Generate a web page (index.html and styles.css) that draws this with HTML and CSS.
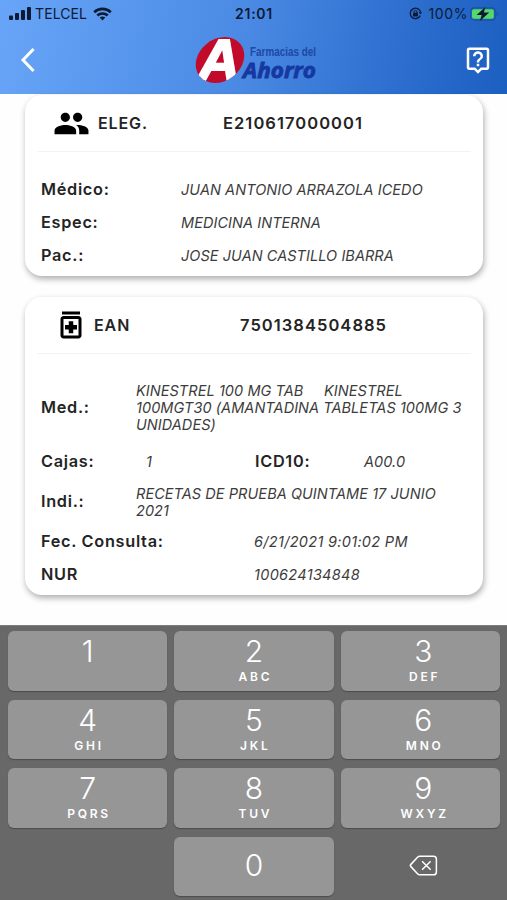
FILE: index.html
```
<!DOCTYPE html>
<html lang="es">
<head>
  <meta charset="UTF-8">
  <title>Farmacias del Ahorro</title>
  <meta name="viewport" content="width=device-width, initial-scale=1.0">
  <link rel="stylesheet" href="styles.css">
</head>
<body>
<!-- Header -->
<header>
  <div class="status-bar">
    <div class="status-left">
      <svg width="22" height="13" viewBox="0 0 22 13">
        <rect x="0" y="8.5" width="4" height="4.5" rx="1"/>
        <rect x="6" y="6" width="4" height="7" rx="1"/>
        <rect x="12" y="3" width="4" height="10" rx="1"/>
        <rect x="18" y="0" width="4" height="13" rx="1"/>
      </svg>
      <span class="carrier">TELCEL</span>
      <svg width="19" height="14" viewBox="0 0 19 14" fill="none" stroke="#0c1a33" stroke-width="2.6">
        <path d="M1.2 5.2a12 12 0 0 1 16.6 0"/>
        <path d="M4.3 8.5a7.6 7.6 0 0 1 10.4 0"/>
        <path d="M6.7 10.6a4.3 4.3 0 0 1 5.6 0L9.5 13.6z" fill="#0c1a33" stroke="none"/>
      </svg>
    </div>
    <div class="time">21:01</div>
    <div class="status-right">
      <svg width="13" height="13" viewBox="0 0 13 13">
        <path d="M11.2 8.6A5.2 5.2 0 1 1 11.6 5.4" fill="none" stroke="#0c1a33" stroke-width="1.3"/>
        <path d="M9.8 5.2h3.2l-1.5 2.4z"/>
        <rect x="4" y="5.8" width="5" height="3.6" rx=".6"/>
        <path d="M5 6V5a1.5 1.5 0 0 1 3 0v1" fill="none" stroke="#0c1a33"/>
      </svg>
      <span class="percent">100%</span>
      <svg width="29" height="14" viewBox="0 0 29 14">
        <rect x=".6" y=".9" width="24.6" height="12.2" rx="3.4" fill="none" stroke="#1f5292" stroke-width="1.1"/>
        <rect x="2" y="2.2" width="21.8" height="9.6" rx="2" fill="#55d86c"/>
        <path d="M26.6 5v4.2q1.7-.7 1.7-2.1T26.6 5z" fill="#1f5292"/>
        <path d="M15.3 0L6.6 8h5L10 14l9.2-8.4h-5.3z"/>
      </svg>
    </div>
  </div>
  <nav>
    <svg class="back" width="16" height="26" viewBox="0 0 16 26"><path d="M13.6 2L3 13l10.6 11" fill="none" stroke="#fff" stroke-width="3"/></svg>
    <svg class="logo" width="124" height="50" viewBox="0 0 124 50">
      <defs>
        <clipPath id="oval"><ellipse cx="25" cy="25" rx="26" ry="21" transform="rotate(-38 25 25)"/></clipPath>
      </defs>
      <g clip-path="url(#oval)">
        <rect width="54" height="50" fill="#c20a2b"/>
        <text class="logo-a" x="3" y="44.500" textLength="42" lengthAdjust="spacingAndGlyphs">A</text>
      </g>
      <text class="logo-small" x="55" y="20.500" textLength="66" lengthAdjust="spacingAndGlyphs">Farmacias del</text>
      <text class="logo-big" x="48" y="43" textLength="73" lengthAdjust="spacingAndGlyphs">Ahorro</text>
    </svg>
    <svg class="help" width="30" height="30" viewBox="0 0 24 24" fill="#fff"><path d="M19 2H5c-1.11 0-2 .9-2 2v14c0 1.1.89 2 2 2h4l3 3 3-3h4c1.1 0 2-.9 2-2V4c0-1.1-.9-2-2-2zm0 16h-4.83L12 20.17 9.83 18H5V4h14v14zm-8-3h2v2h-2zm1-8c1.1 0 2 .9 2 2 0 2-3 1.75-3 5h2c0-2.25 3-2.5 3-5 0-2.21-1.79-4-4-4s-4 1.79-4 4h2c0-1.1.9-2 2-2z"/></svg>
  </nav>
</header>

<!-- Cards -->
<main>
  <section class="card card-eleg">
    <div class="card-head">
      <svg width="37" height="37" viewBox="0 0 24 24"><path d="M16 11c1.66 0 2.99-1.34 2.99-3S17.66 5 16 5s-3 1.34-3 3 1.34 3 3 3zm-8 0c1.66 0 2.99-1.34 2.99-3S9.66 5 8 5 5 6.340 5 8s1.340 3 3 3zm0 2c-2.330 0-7 1.170-7 3.500V19h14v-2.500c0-2.330-4.670-3.500-7-3.500zm8 0c-.29 0-.62.02-.97.050 1.160.840 1.970 1.970 1.970 3.450V19h6v-2.500c0-2.330-4.670-3.500-7-3.500z"/></svg>
      <span class="head-label">ELEG.</span>
      <span class="head-value">E210617000001</span>
    </div>
    <div class="row"><b>Médico:</b><i>JUAN ANTONIO ARRAZOLA ICEDO</i></div>
    <div class="row"><b>Espec:</b><i>MEDICINA INTERNA</i></div>
    <div class="row"><b>Pac.:</b><i>JOSE JUAN CASTILLO IBARRA</i></div>
  </section>

  <section class="card card-ean">
    <div class="card-head">
      <svg width="36" height="36" viewBox="0 0 24 24"><path d="M6 3h12v2H6zM17 6H7c-1.100 0-2 .9-2 2v11c0 1.100.9 2 2 2h10c1.100 0 2-.9 2-2V8c0-1.100-.9-2-2-2zm0 13H7V8h10v11zM10.500 17.500h3V15H16v-3h-2.500V9.500h-3V12H8v3h2.500z"/></svg>
      <span class="head-label">EAN</span>
      <span class="head-value">7501384504885</span>
    </div>
    <div class="row row-med"><b>Med.:</b><i>KINESTREL 100 MG TAB     KINESTREL
100MGT30 (AMANTADINA TABLETAS 100MG 3
UNIDADES)</i></div>
    <div class="row row-cajas"><b>Cajas:</b><i>1</i><b>ICD10:</b><i>A00.0</i></div>
    <div class="row row-indi"><b>Indi.:</b><i>RECETAS DE PRUEBA QUINTAME 17 JUNIO
2021</i></div>
    <div class="row row-wide"><b>Fec. Consulta:</b><i>6/21/2021 9:01:02 PM</i></div>
    <div class="row row-wide"><b>NUR</b><i>100624134848</i></div>
  </section>
</main>

<!-- Keypad -->
<div class="keypad">
  <button class="key">1<small></small></button>
  <button class="key">2<small>ABC</small></button>
  <button class="key">3<small>DEF</small></button>
  <button class="key">4<small>GHI</small></button>
  <button class="key">5<small>JKL</small></button>
  <button class="key">6<small>MNO</small></button>
  <button class="key">7<small>PQRS</small></button>
  <button class="key">8<small>TUV</small></button>
  <button class="key">9<small>WXYZ</small></button>
  <span></span>
  <button class="key key-zero">0</button>
  <button class="key key-delete">
    <svg width="29" height="21" viewBox="0 0 30 22" fill="none" stroke="#fff" stroke-width="1.6" stroke-linejoin="round" stroke-linecap="round">
      <path d="M11 1.200h14.500a3 3 0 0 1 3 3v13.600a3 3 0 0 1-3 3H11q-1.200 0-2-.9L1.800 12.200q-1-1.200 0-2.400L9 2.100q.8-.9 2-.9z"/>
      <path d="M14 7l8 8M22 7l-8 8"/>
    </svg>
  </button>
</div>
</body>
</html>
```
FILE: styles.css
```
* {
  box-sizing: border-box;
}

body {
  margin: 0;
  height: 900px;
  display: flex;
  flex-direction: column;
  overflow: hidden;
  background: #fefefe;
  font-family: Inter, "Liberation Sans", sans-serif;
  color: #242424;
}

/* Header */
header {
  height: 94px;
  flex: none;
  background: linear-gradient(100deg, #68a5f8 0%, #4a8ae4 48%, #2f70d0 76%, #1b5fc1 100%);
}

.status-bar {
  height: 27px;
  padding: 0 8px 0 9px;
  display: grid;
  grid-template-columns: 1fr auto 1fr;
  align-items: center;
  font-size: 14px;
  color: #0c1a33;
  fill: #0c1a33;
}

.status-left,
.status-right {
  display: flex;
  align-items: center;
}

.carrier {
  margin: 0 6px 0 4px;
  letter-spacing: 0.1px;
}

.time {
  font-weight: 600;
  letter-spacing: 0.7px;
}

.status-right {
  justify-content: flex-end;
}

.percent {
  margin: 0 2px 0 6px;
  letter-spacing: 0.6px;
}

nav {
  height: 65px;
  padding: 0 14px 0 20px;
  display: grid;
  grid-template-columns: 1fr auto 1fr;
  align-items: center;
}

.help {
  justify-self: end;
}

.logo-a {
  font: italic bold 58px "Liberation Sans", sans-serif;
  fill: #fff;
  stroke: #fff;
  stroke-width: 2px;
}

.logo-small {
  font: bold 13.5px "Liberation Sans Narrow", "Liberation Sans", sans-serif;
  fill: #1d48a6;
}

.logo-big {
  font: italic bold 22px "Open Sans", sans-serif;
  fill: #1638a0;
  stroke: #1638a0;
  stroke-width: 0.8px;
}

/* Cards */
main {
  height: 531px;
  flex: none;
  padding: 1px 24px 0 25px;
}

.card {
  background: #fff;
  border-radius: 17px;
  padding: 0 12px;
  box-shadow: 1px 3px 6px rgba(0, 0, 0, 0.32);
}

.card-eleg {
  height: 181px;
  margin-bottom: 21px;
}

.card-ean {
  height: 298px;
}

.card-head {
  height: 57px;
  padding-left: 16px;
  margin-bottom: 21px;
  display: flex;
  align-items: center;
  border-bottom: 1px solid #f3f3f3;
  font-size: 16px;
  font-weight: 600;
  letter-spacing: 0.9px;
}

.card-ean .card-head {
  margin-bottom: 20px;
}

.head-label {
  width: 125px;
  margin-left: 8px;
}

.card-ean .head-label {
  width: 146px;
  margin-left: 5px;
}

.head-value {
  font-size: 16.5px;
  letter-spacing: 1.05px;
}

.row {
  height: 33px;
  padding-left: 4px;
  display: grid;
  grid-template-columns: 140px 1fr;
  align-items: center;
}

.row b {
  padding-bottom: 2px;
  font-size: 16.3px;
  font-weight: 600;
  letter-spacing: 0.7px;
}

.row i {
  font-size: 14.5px;
  line-height: 17px;
  letter-spacing: 0.06px;
  color: #3c3c3c;
  white-space: pre;
}

.row-med {
  height: 71px;
  padding-bottom: 4px;
  grid-template-columns: 95px 1fr;
}

.row-cajas {
  grid-template-columns: 105px 109px 109px 1fr;
}

.row-indi {
  height: 47px;
  grid-template-columns: 95px 1fr;
}

.row-wide {
  grid-template-columns: 213px 1fr;
}

.row-wide i {
  letter-spacing: 0.3px;
}

/* Keypad */
.keypad {
  flex: 1;
  padding: 5px 7px 0 8px;
  display: grid;
  grid-template-columns: repeat(3, 1fr);
  grid-auto-rows: 59.5px;
  align-content: start;
  gap: 9px 7px;
  background: #686868;
  border-top: 1px solid #7d7d7d;
}

.key {
  padding: 3px 0 0;
  display: flex;
  flex-direction: column;
  align-items: center;
  border: none;
  border-radius: 6px;
  background: #969696;
  box-shadow: 0 1px 1px #4c4c4c;
  color: #fff;
  font-family: inherit;
  font-size: 30px;
  font-weight: 300;
  line-height: 35px;
}

.key:nth-child(3n) {
  padding-left: 6px;
}

.key small {
  font-size: 12px;
  font-weight: 600;
  line-height: 15px;
  letter-spacing: 2.8px;
  margin-right: -2.8px;
}

.key-zero,
.key-delete {
  padding: 0 0 2px;
  justify-content: center;
}

.key-delete {
  background: none;
  box-shadow: none;
}
```
